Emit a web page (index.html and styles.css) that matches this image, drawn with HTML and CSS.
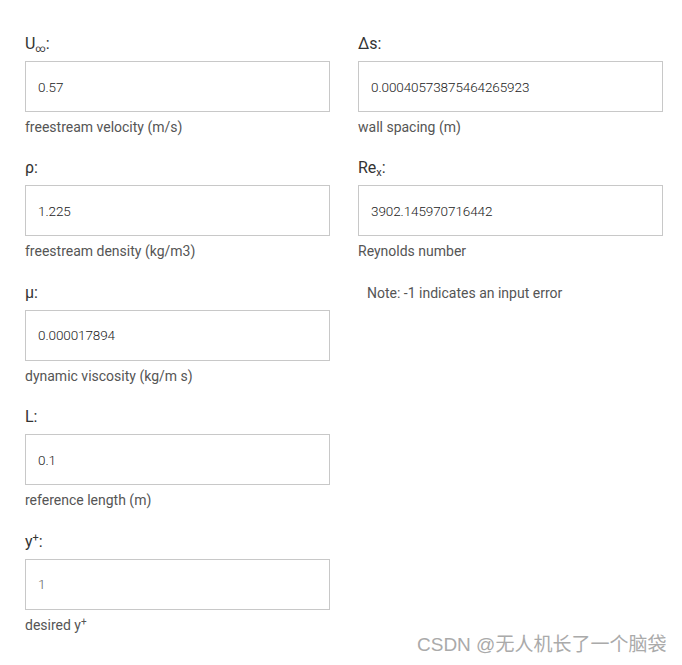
FILE: index.html
```html
<!DOCTYPE html>
<html>
<head>
<meta charset="utf-8">
<link rel="stylesheet" href="styles.css">
</head>
<body>
<div class="page">
  <div class="col">
    <div class="field">
      <div class="label">U<sub class="sub-inf">∞</sub>:</div>
      <div class="input">0.57</div>
      <div class="help">freestream velocity (m/s)</div>
    </div>
    <div class="field">
      <div class="label">ρ:</div>
      <div class="input">1.225</div>
      <div class="help">freestream density (kg/m3)</div>
    </div>
    <div class="field">
      <div class="label">μ:</div>
      <div class="input">0.000017894</div>
      <div class="help">dynamic viscosity (kg/m s)</div>
    </div>
    <div class="field">
      <div class="label">L:</div>
      <div class="input">0.1</div>
      <div class="help">reference length (m)</div>
    </div>
    <div class="field">
      <div class="label">y<sup>+</sup>:</div>
      <div class="input light">1</div>
      <div class="help">desired y<sup class="sup-small">+</sup></div>
    </div>
  </div>
  <div class="col">
    <div class="field">
      <div class="label">Δs:</div>
      <div class="input">0.00040573875464265923</div>
      <div class="help">wall spacing (m)</div>
    </div>
    <div class="field">
      <div class="label">Re<sub>x</sub>:</div>
      <div class="input">3902.145970716442</div>
      <div class="help">Reynolds number</div>
    </div>
    <p class="note">Note: -1 indicates an input error</p>
  </div>
</div>
<div class="watermark">CSDN @无人机长了一个脑袋</div>
</body>
</html>
```
FILE: styles.css
```css
html, body {
  margin: 0;
  padding: 0;
  background: #fff;
}
body {
  font-family: Roboto, "Open Sans", Arial, sans-serif;
  color: #444;
  width: 682px;
  height: 665px;
  position: relative;
  overflow: hidden;
}
.page {
  display: flex;
  gap: 28px;
  padding: 33px 0 0 25px;
}
.col {
  width: 305px;
  display: flex;
  flex-direction: column;
}
.field {
  display: flex;
  flex-direction: column;
  margin-bottom: 20.4px;
}
.label {
  font-size: 16px;
  line-height: 22px;
  height: 22px;
  color: #333;
  margin-bottom: 6px;
}
.label sub, .label sup {
  font-size: 11px;
  line-height: 0;
}
.label sub {
  vertical-align: -3px;
}
.label .sub-inf {
  font-size: 10px;
  vertical-align: -3px;
}
.label sup {
  vertical-align: 6px;
}
.input {
  box-sizing: border-box;
  height: 51px;
  border: 1px solid #c8c8c8;
  padding: 0 12px;
  display: flex;
  align-items: center;
  font-size: 13.5px;
  font-weight: 300;
  color: #222;
  letter-spacing: -0.1px;
}
.input.light {
  color: #666;
}
.help {
  margin-top: 5px;
  font-size: 14px;
  line-height: 20px;
  color: #555;
}
.help .sup-small {
  font-size: 10px;
  line-height: 0;
  vertical-align: 5px;
}
.note {
  margin: 0 0 0 9px;
  font-size: 14px;
  line-height: 20px;
  color: #555;
  position: relative;
  top: 1px;
}
.watermark {
  position: absolute;
  left: 417px;
  top: 633px;
  white-space: nowrap;
  font-family: "Liberation Sans", "Noto Sans CJK SC", sans-serif;
  font-size: 19px;
  line-height: 24px;
  color: #aaa;
}
```
